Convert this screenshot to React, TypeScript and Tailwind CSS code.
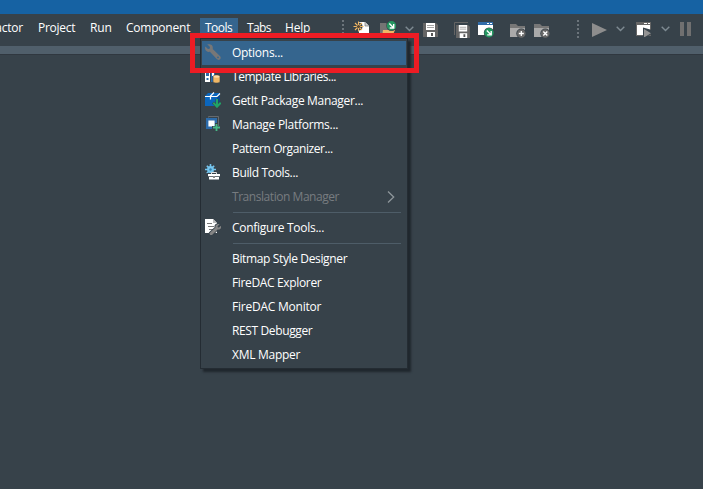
import type { ReactNode } from "react";

function Svg({ children, w = 16, className = "" }: { children: ReactNode; w?: number; className?: string }) {
  return (
    <svg width={w} height="16" viewBox={`0 0 ${w} 16`} fill="none" className={`block shrink-0 ${className}`}>
      {children}
    </svg>
  );
}

const Grip = ({ className }: { className: string }) => (
  <svg width="2" height="18" viewBox="0 0 2 18" className={`block shrink-0 ${className}`} shapeRendering="crispEdges">
    {[0, 4, 8, 12, 16].map((y) => (
      <rect key={y} y={y} width="2" height="2" fill="#6b747b" />
    ))}
  </svg>
);

const Chevron = ({ className }: { className: string }) => (
  <svg width="9" height="6" viewBox="0 0 9 6" fill="none" className={`block shrink-0 ${className}`}>
    <path d="M.7.8 4.5 4.6 8.3.8" stroke="#7e8a92" strokeWidth="1.4" />
  </svg>
);

const Floppy = () => (
  <g>
    <path d="M0 1h13l2 2v12H0z" fill="#656565" />
    <path d="M3 1h9v7H3zM4 10h8v5H4z" fill="#fff" />
    <path d="M4 3.5h7M4 5.5h7" stroke="#a5a5a5" />
    <path d="M8 11h2v3H8z" fill="#555" />
  </g>
);

const Folder = () => (
  <g>
    <path d="M0 2h6l2 2h7v2H0z" fill="#777" />
    <path d="M0 6h15v9H0z" fill="#aaa" />
    <circle cx="11.3" cy="11.5" r="5" fill="#37424a" />
    <circle cx="11.3" cy="11.5" r="4.3" fill="#686868" />
  </g>
);

const GreenArrow = ({ x, y }: { x: number; y: number }) => (
  <g transform={`translate(${x} ${y})`}>
    <circle r="4.7" fill="#249761" />
    <path d="M-2.2-2.2 2 2M2.2-1.8v4h-4" stroke="#fff" strokeWidth="1.4" />
  </g>
);

function Toolbar() {
  return (
    <div className="absolute left-[342px] top-[20px] flex h-[18px] items-center">
      <Grip className="" />
      <Svg className="ml-[9px]" w={17}>
        <path d="M6 1h6l4 4v11H6z" fill="#fff" />
        <path d="M12 1v4h4" fill="#d2d2d2" stroke="#777" strokeWidth=".7" />
        <circle cx="5.5" cy="5.5" r="4" fill="#37424a" />
        <path d="M5.5.5v10M.5 5.5h10M2 2l7 7M9 2 2 9" stroke="#efb765" strokeWidth="1.1" />
        <circle cx="5.5" cy="5.5" r="1.6" fill="#534331" />
      </Svg>
      <Svg className="ml-[10px]">
        <path d="M0 4V2h6l2 2v12H0z" fill="#747474" />
        <path d="M3 9h12l-3 7H2z" fill="#efb765" />
        <circle cx="11.5" cy="4.8" r="5.2" fill="#37424a" />
        <GreenArrow x={11.5} y={4.8} />
      </Svg>
      <Chevron className="ml-[9px]" />
      <Svg className="ml-[9px] mt-px">
        <Floppy />
      </Svg>
      <Svg className="ml-[15px] mt-px" w={17}>
        <path d="M.5 13V.5H14" stroke="#656565" />
        <g transform="translate(2 2) scale(.93)"><Floppy /></g>
      </Svg>
      <Svg className="ml-[7px] mt-px" w={17}>
        <path d="M0 0h15v13H0z" fill="#fff" />
        <path d="M0 0h15v3H0z" fill="#316ca9" />
        <path d="M9 1h2v1H9zM12 1h2v1h-2z" fill="#fff" />
        <circle cx="11" cy="10.7" r="5.2" fill="#37424a" />
        <GreenArrow x={11} y={10.7} />
      </Svg>
      <Svg className="ml-[15px] mt-px">
        <Folder />
        <path d="M11.3 9v5M8.8 11.5h5" stroke="#fff" strokeWidth="1.3" />
      </Svg>
      <Svg className="ml-[8px] mt-px">
        <Folder />
        <path d="m9.3 9.5 4 4m0-4-4 4" stroke="#fff" strokeWidth="1.4" />
      </Svg>
      <Grip className="ml-[27px]" />
      <Svg className="ml-[13px] mt-px" w={15}>
        <path d="M0 1v14l15-7z" fill="#8d8d8d" />
      </Svg>
      <Chevron className="ml-[9px]" />
      <Svg className="ml-[11px]" w={16}>
        <path d="M0 1h15v14H0z" fill="#666" />
        <path d="M1 4h13v10H1z" fill="#fff" />
        <path d="M8 2h3v1H8zM12 2h2v1h-2z" fill="#fff" />
        <path d="M7 6.5V17l9-4V9z" fill="#37424a" />
        <path d="M8 8v8.5l7-4.2z" fill="#929292" />
      </Svg>
      <Chevron className="ml-[9px]" />
      <div className="ml-[10px] flex gap-[3px]">
        <div className="h-[14px] w-1 bg-[#707070]" />
        <div className="h-[14px] w-1 bg-[#707070]" />
      </div>
    </div>
  );
}

const wrench = "M2.2.3 5 3.1 4.6 4.7 3 5.1.3 2.4C-.2 4.2.1 6 1.4 7.1c1.1.9 2.3 1 3.5.7l6.8 7.3c1 1.1 2.6 1 3.4.1.9-.9.8-2.3-.2-3.2L7.7 5.1c.4-1.4.1-2.8-.8-3.8C5.6.1 4 0 2.2.3z";

const icons: Record<string, ReactNode> = {
  options: (
    <Svg>
      <path d={wrench} fill="#777" />
      <circle cx="13" cy="13.3" r=".9" fill="#35658e" />
    </Svg>
  ),
  template: (
    <Svg>
      <path d="M0 1h5v13H0z" fill="#fff" />
      <path d="M1 2h3v6H1zM6 1h4v13H6z" fill="#2c6baa" />
      <path d="M1.5 10h2v2h-2z" fill="#2c6baa" />
      <path d="M7 2h2v6H7z" fill="#fff" />
      <path d="M8 8.5c0-2 7-2 7 0v5c0 2-7 2-7 0z" fill="#f0b765" stroke="#37424a" strokeWidth=".6" />
      <ellipse cx="11.5" cy="8.6" rx="3" ry="1.2" fill="#ffdca6" />
    </Svg>
  ),
  getit: (
    <Svg>
      <path d="M0 4 3 1h12l-3 3v10H0z" fill="#0b66bd" />
      <path d="m12 4 3-3v8l-3 5z" fill="#084c93" />
      <path d="M0 4.5h12l3-3M5 4.5l4-4M5.5 4v3.5" stroke="#fff" strokeWidth="1.2" />
      <path d="M12 7v7M8 10.5l4 4 4-4" stroke="#37424a" strokeWidth="3" />
      <path d="M12 7v8M8.3 10.8l3.7 3.9 3.7-3.9" stroke="#20a366" strokeWidth="2" />
    </Svg>
  ),
  platforms: (
    <Svg>
      <path d="M3.5 1.5v-1h10v10" stroke="#656a6e" />
      <path d="M2.2 3.2h8.6v8.6H2.2z" fill="#fff" stroke="#2c6baa" strokeWidth="2.4" />
      <path d="M11.5 7v9M7 11.5h8" stroke="#37424a" strokeWidth="3" />
      <path d="M11.5 8v7M8 11.5h7" stroke="#48b886" strokeWidth="1.8" />
    </Svg>
  ),
  build: (
    <Svg>
      <path d="M5.5 0v11M0 5.5h11M1.8 1.8l7.4 7.4M9.2 1.8 1.8 9.2" stroke="#75c5ee" strokeWidth="1.6" />
      <circle cx="5.5" cy="5.5" r="3.4" fill="#75c5ee" />
      <circle cx="5.5" cy="5.5" r="1.2" fill="#347eab" />
      <path d="M2 9h14v7H2z" fill="#37424a" />
      <path d="M6.5 10V8.5h5V10" stroke="#ddd" />
      <path d="M3 10h12v2.3H3zM4 13h10v2.5H4z" fill="#fff" />
      <path d="M8 12h2v2H8z" fill="#888" />
    </Svg>
  ),
  configure: (
    <Svg>
      <path d="M0 0h8l4 4v10H0z" fill="#fff" />
      <path d="M8 0v4h4" fill="#bbb" />
      <path d="M2 4.5h5M3 7.5h6M4 10.5h4" stroke="#777" />
      <g transform="translate(16.2 5) scale(-.74 .7)">
        <path d={wrench} fill="#858585" stroke="#37424a" strokeWidth="2.4" />
        <path d={wrench} fill="#858585" />
      </g>
    </Svg>
  ),
};

type Item = { text: string; tracking: string; icon?: string; active?: boolean; disabled?: boolean; sep?: boolean };
const items: Item[] = [
  { text: "Options...", tracking: "tracking-[-0.28px]", icon: "options", active: true },
  { text: "Template Libraries...", tracking: "tracking-[-0.46px]", icon: "template" },
  { text: "GetIt Package Manager...", tracking: "tracking-[-0.31px]", icon: "getit" },
  { text: "Manage Platforms...", tracking: "tracking-[-0.28px]", icon: "platforms" },
  { text: "Pattern Organizer...", tracking: "tracking-[-0.42px]" },
  { text: "Build Tools...", tracking: "tracking-[-0.35px]", icon: "build" },
  { text: "Translation Manager", tracking: "tracking-[-0.45px]", disabled: true, sep: true },
  { text: "Configure Tools...", tracking: "tracking-[-0.28px]", icon: "configure", sep: true },
  { text: "Bitmap Style Designer", tracking: "tracking-[-0.36px]" },
  { text: "FireDAC Explorer", tracking: "tracking-[-0.35px]" },
  { text: "FireDAC Monitor", tracking: "tracking-[-0.23px]" },
  { text: "REST Debugger", tracking: "tracking-[-0.37px]" },
  { text: "XML Mapper", tracking: "tracking-[-0.28px]" },
];

function ToolsMenu() {
  return (
    <div className="absolute left-[200px] top-[38px] h-[331px] w-[208px] border border-[#242c33] bg-[#37424a] px-px pt-[2px] shadow-[3px_3px_2px_#20272d]">
      {items.map((it) => (
        <div key={it.text}>
          <div className={`flex h-6 items-center pl-[3px] ${it.active ? "bg-[#35658e]" : ""}`}>
            <div className="w-[27px] shrink-0 pb-0.5">{it.icon && icons[it.icon]}</div>
            <span className={`whitespace-nowrap ${it.tracking} ${it.disabled ? "text-[#777c80]" : "text-white"}`}>{it.text}</span>
            {it.disabled && (
              <svg width="8" height="12" viewBox="0 0 8 12" fill="none" className="ml-auto mr-[11px]">
                <path d="m1 .5 5.7 5.5L1 11.5" stroke="#8e969b" strokeWidth="1.3" />
              </svg>
            )}
          </div>
          {it.sep && (
            <div className="flex h-[7px] items-center pl-[31px] pr-[5px]">
              <div className="h-px w-full bg-[#4e5d68]" />
            </div>
          )}
        </div>
      ))}
    </div>
  );
}

export default function App() {
  return (
    <div className="relative h-[489px] w-[703px] overflow-hidden bg-[#37424a] font-['Open_Sans','Noto_Sans',sans-serif] text-[12px] leading-4 text-white">
      <div className="h-[14px] bg-[#1662a3]" />
      <div className="flex h-8 items-start pt-1">
        <div className="flex w-[23px] justify-end pt-0.5 tracking-[-0.2px]">actor</div>
        <div className="ml-[9px] w-[52px] pl-1.5 pt-0.5 tracking-[-0.25px]">Project</div>
        <div className="w-9 pl-1.5 pt-0.5 tracking-[-0.1px]">Run</div>
        <div className="w-20 pl-1.5 pt-0.5 tracking-[-0.22px]">Component</div>
        <div className="h-7 w-[38px] bg-[#35658e] pl-[5px] pt-0.5 tracking-[-0.5px]">Tools</div>
        <div className="ml-[3px] w-[38px] pl-1.5 pt-0.5 tracking-[-0.6px]">Tabs</div>
        <div className="w-10 pl-1.5 pt-0.5 tracking-[-0.2px]">Help</div>
      </div>
      <div className="h-2 bg-[#505f6b]" />
      <div className="h-px bg-[#303840]" />
      <Toolbar />
      <ToolsMenu />
      <div className="absolute left-[190px] top-[33px] h-[40px] w-[229px] border-5 border-[#ed1c24]" />
    </div>
  );
}
